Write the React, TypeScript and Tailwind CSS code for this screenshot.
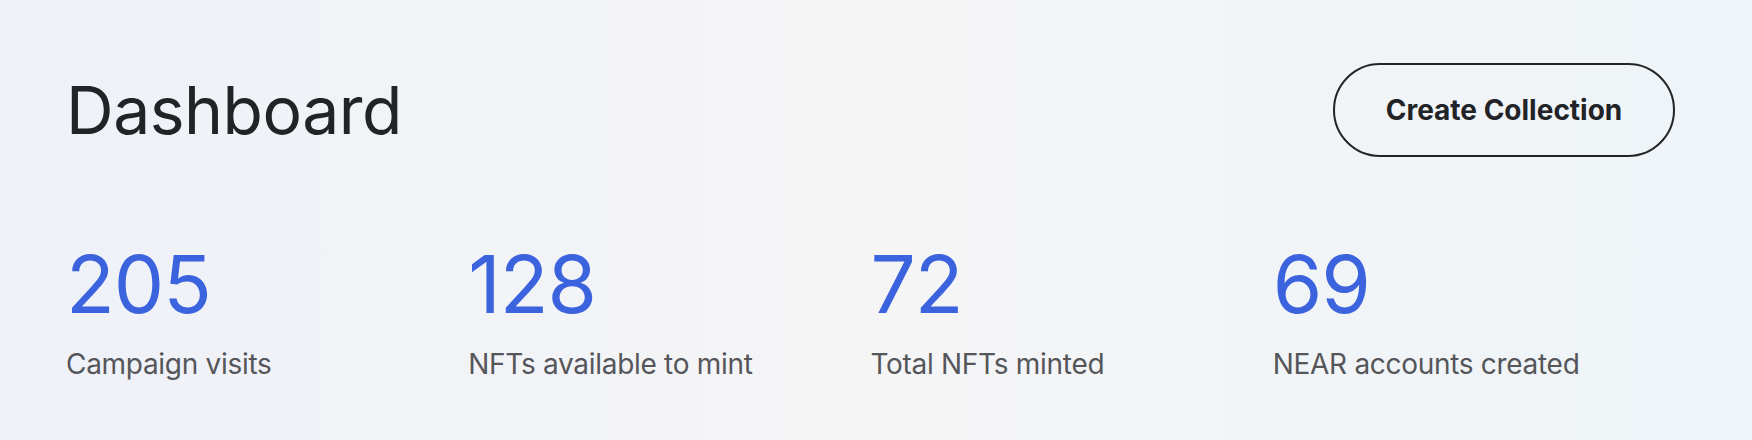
import React from 'react';

interface Stat {
  value: string;
  label: string;
}

const stats: Stat[] = [
  { value: '205', label: 'Campaign visits' },
  { value: '128', label: 'NFTs available to mint' },
  { value: '72', label: 'Total NFTs minted' },
  { value: '69', label: 'NEAR accounts created' },
];

const App = () => {
  return (
    <div
      className="w-[1752px] h-[440px] bg-gradient-to-r from-[#eef1f8] via-[#f5f5f6] to-[#eef4f8] pl-[66px] pr-[77px] pt-[63px]"
      style={{ fontFamily: 'Inter, "Noto Sans", sans-serif' }}
    >
      {/* Header */}
      <div className="flex items-center justify-between h-[94px]">
        <h1 className="text-[66px] leading-none font-normal text-[#222326] tracking-[-0.5px]">Dashboard</h1>
        <button className="h-[94px] w-[342px] rounded-full border-2 border-[#232427] text-[28px] font-bold text-[#222326]">
          Create Collection
        </button>
      </div>

      {/* Stats */}
      <div className="grid grid-cols-4 mt-[87px]">
        {stats.map((stat) => (
          <div key={stat.label} className="flex flex-col">
            <span className="text-[80px] leading-none font-normal text-[#3c63de] tracking-[-1px]">{stat.value}</span>
            <span className="mt-[26px] text-[28px] leading-none text-[#55565a] tracking-[-0.3px]">{stat.label}</span>
          </div>
        ))}
      </div>
    </div>
  );
};

export default App;
